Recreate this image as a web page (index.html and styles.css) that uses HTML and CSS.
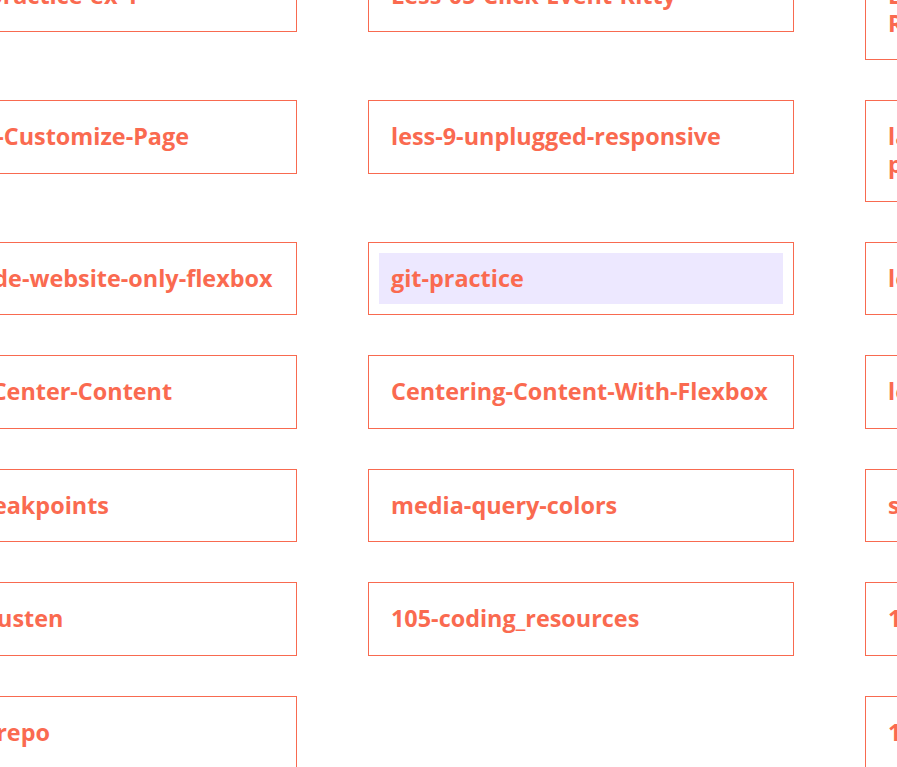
FILE: index.html
```html
<!DOCTYPE html>
<html lang="en">
<head>
<meta charset="utf-8">
<title>Repositories</title>
<link rel="stylesheet" href="styles.css">
</head>
<body>
<main class="page">
  <ul class="repo-grid">
    <li class="repo"><a class="repo-link" href="#">flexbox-practice-ex-1</a></li>
    <li class="repo"><a class="repo-link" href="#">Less-05-Click-Event-Kitty</a></li>
    <li class="repo"><a class="repo-link" href="#">Less-06-Click-Event-Kitty-Refactored</a></li>

    <li class="repo"><a class="repo-link" href="#">Portfolio-Customize-Page</a></li>
    <li class="repo"><a class="repo-link" href="#">less-9-unplugged-responsive</a></li>
    <li class="repo"><a class="repo-link" href="#">layout-with-flexbox-and-grid-practice</a></li>

    <li class="repo"><a class="repo-link one-line" href="#">Handmade-website-only-flexbox</a></li>
    <li class="repo"><a class="repo-link is-active" href="#">git-practice</a></li>
    <li class="repo"><a class="repo-link" href="#">less-10-grid-layout</a></li>

    <li class="repo"><a class="repo-link" href="#">Flexbox-Center-Content</a></li>
    <li class="repo"><a class="repo-link" href="#">Centering-Content-With-Flexbox</a></li>
    <li class="repo"><a class="repo-link" href="#">less-11-positioning</a></li>

    <li class="repo"><a class="repo-link" href="#">Using-Breakpoints</a></li>
    <li class="repo"><a class="repo-link" href="#">media-query-colors</a></li>
    <li class="repo"><a class="repo-link" href="#">sass-practice</a></li>

    <li class="repo"><a class="repo-link" href="#">Novels-Austen</a></li>
    <li class="repo"><a class="repo-link" href="#">105-coding_resources</a></li>
    <li class="repo"><a class="repo-link" href="#">106-portfolio</a></li>

    <li class="repo"><a class="repo-link" href="#">practice-repo</a></li>
    <li class="repo repo-empty"></li>
    <li class="repo"><a class="repo-link" href="#">107-final-project</a></li>
  </ul>
</main>
</body>
</html>
```

FILE: styles.css
```css
html, body {
  margin: 0;
  padding: 0;
  background: #ffffff;
  overflow: hidden;
}

body {
  font-family: "Open Sans", "Liberation Sans", sans-serif;
  color: #fa6a50;
}

.page {
  margin-top: -41.5px;
  margin-left: -129px;
}

.repo-grid {
  list-style: none;
  margin: 0;
  padding: 0;
  display: grid;
  grid-template-columns: repeat(3, 426px);
  column-gap: 71px;
  row-gap: 40px;
  align-items: start;
}

.repo {
  border: 1px solid #f86a50;
  padding: 10px;
}

.repo-empty {
  border-color: transparent;
}

.repo-link {
  display: block;
  padding: 11.25px 12px 12.25px;
  font-size: 23.4px;
  line-height: 28px;
  font-weight: 700;
  color: #fa6a50;
  text-decoration: none;
}

.one-line {
  white-space: nowrap;
}

.repo-link.is-active {
  background: #ede8ff;
}
```
